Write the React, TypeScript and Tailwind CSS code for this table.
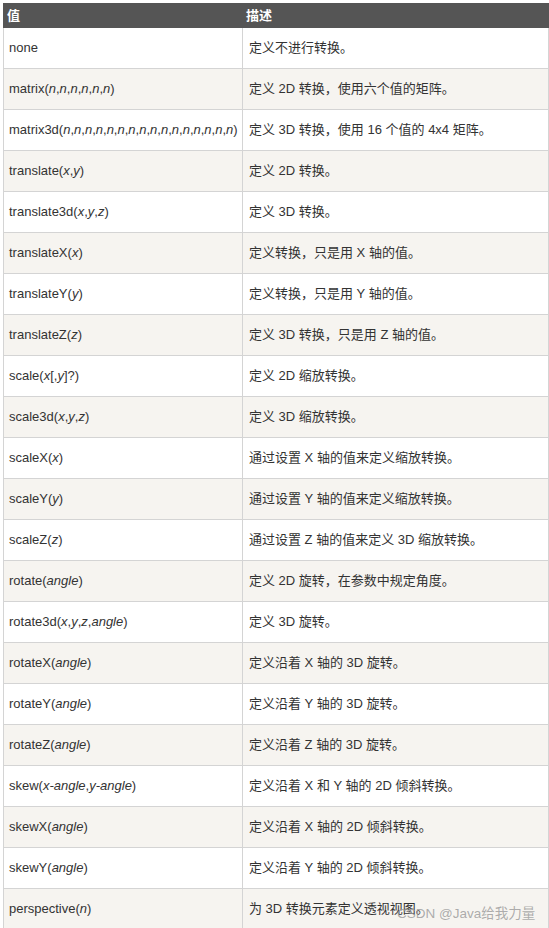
import React from 'react';

const rows: [string, string][] = [
  ['none', '定义不进行转换。'],
  ['matrix({n},{n},{n},{n},{n},{n})', '定义 2D 转换，使用六个值的矩阵。'],
  [
    'matrix3d({n},{n},{n},{n},{n},{n},{n},{n},{n},{n},{n},{n},{n},{n},{n},{n})',
    '定义 3D 转换，使用 16 个值的 4x4 矩阵。',
  ],
  ['translate({x},{y})', '定义 2D 转换。'],
  ['translate3d({x},{y},{z})', '定义 3D 转换。'],
  ['translateX({x})', '定义转换，只是用 X 轴的值。'],
  ['translateY({y})', '定义转换，只是用 Y 轴的值。'],
  ['translateZ({z})', '定义 3D 转换，只是用 Z 轴的值。'],
  ['scale({x}[,{y}]?)', '定义 2D 缩放转换。'],
  ['scale3d({x},{y},{z})', '定义 3D 缩放转换。'],
  ['scaleX({x})', '通过设置 X 轴的值来定义缩放转换。'],
  ['scaleY({y})', '通过设置 Y 轴的值来定义缩放转换。'],
  ['scaleZ({z})', '通过设置 Z 轴的值来定义 3D 缩放转换。'],
  ['rotate({angle})', '定义 2D 旋转，在参数中规定角度。'],
  ['rotate3d({x},{y},{z},{angle})', '定义 3D 旋转。'],
  ['rotateX({angle})', '定义沿着 X 轴的 3D 旋转。'],
  ['rotateY({angle})', '定义沿着 Y 轴的 3D 旋转。'],
  ['rotateZ({angle})', '定义沿着 Z 轴的 3D 旋转。'],
  ['skew({x-angle},{y-angle})', '定义沿着 X 和 Y 轴的 2D 倾斜转换。'],
  ['skewX({angle})', '定义沿着 X 轴的 2D 倾斜转换。'],
  ['skewY({angle})', '定义沿着 Y 轴的 2D 倾斜转换。'],
  ['perspective({n})', '为 3D 转换元素定义透视视图。'],
];

// {x} -> italic x
function Value({ text }: { text: string }) {
  const parts = text.split(/(\{[^}]+\})/).filter(Boolean);
  return (
    <>
      {parts.map((p, i) =>
        p.startsWith('{') ? (
          <i key={i}>{p.slice(1, -1)}</i>
        ) : (
          <span key={i}>{p}</span>
        )
      )}
    </>
  );
}

export default function App() {
  return (
    <div
      className="relative h-[928px] overflow-hidden bg-white pl-[3px] pt-[3px] text-[13px] text-[#333]"
      style={{ fontFamily: '"Liberation Sans", Arial, "Noto Sans CJK SC", sans-serif' }}
    >
      <div className="w-[546px]">
        {/* header */}
        <div className="flex h-[25px] items-center bg-[#555555] font-bold text-white">
          <div className="w-[239px] pl-[4px]">值</div>
          <div className="flex-1 pl-[4px]">描述</div>
        </div>

        {/* rows */}
        <div className="border-l border-r border-[#d4d4d4]">
          {rows.map(([v, d], i) => (
            <div
              key={i}
              className={`flex h-[41px] border-b border-[#d4d4d4] ${
                i % 2 === 1 ? 'bg-[#f6f4f0]' : 'bg-white'
              }`}
            >
              <div className="flex w-[238px] items-center whitespace-nowrap pl-[5px]">
                <Value text={v} />
              </div>
              <div className="flex flex-1 items-center border-l border-[#d4d4d4] pl-[6px]">
                {d}
              </div>
            </div>
          ))}
        </div>
      </div>

      {/* watermark */}
      <div className="absolute left-[397px] top-[904px] text-[13.5px] text-[#999]/80">
        CSDN @Java给我力量
      </div>
    </div>
  );
}
